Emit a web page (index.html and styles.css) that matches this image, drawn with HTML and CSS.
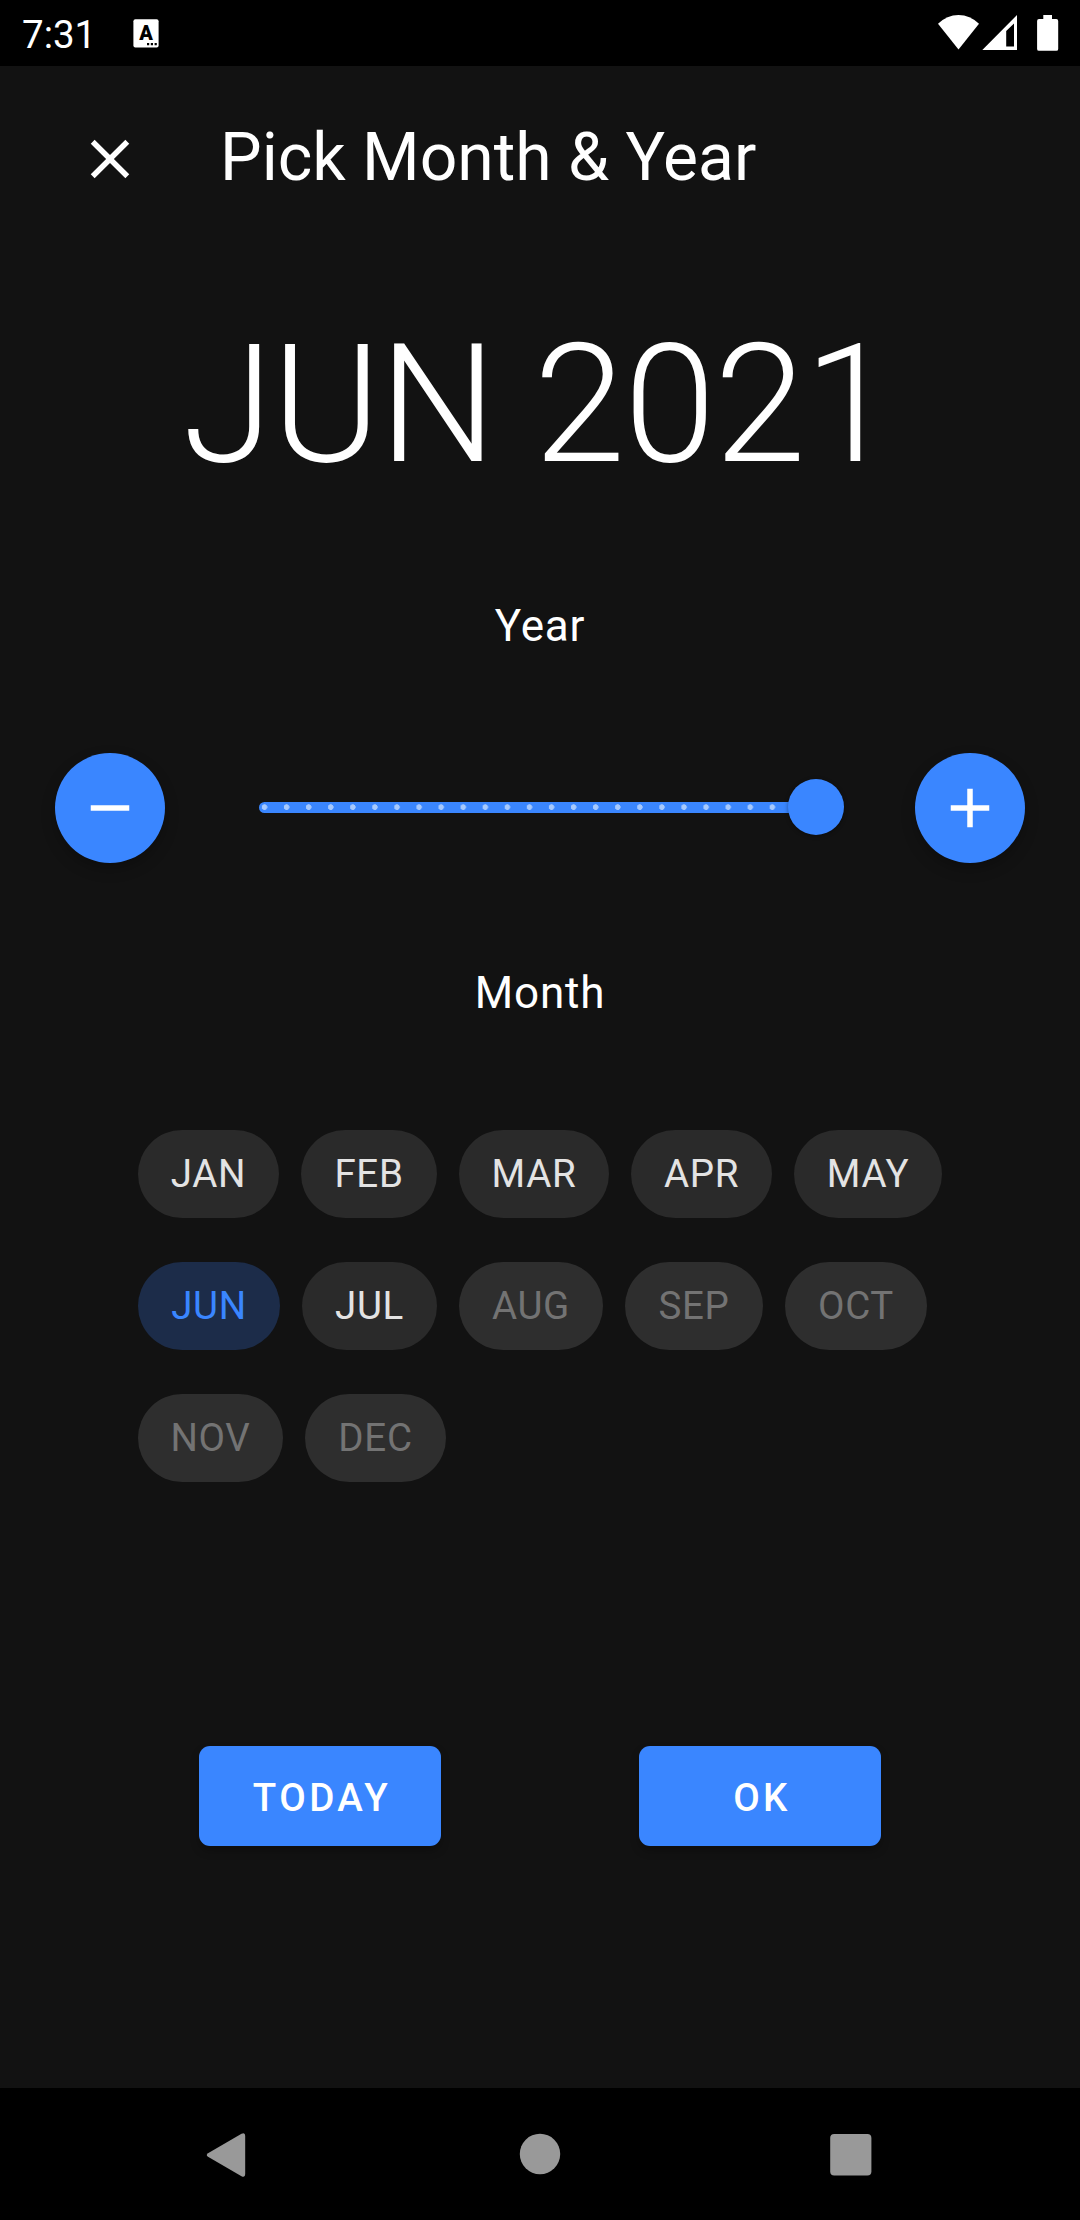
FILE: index.html
```html
<!DOCTYPE html>
<html lang="en">
<head>
<meta charset="utf-8">
<title>Pick Month &amp; Year</title>
<link rel="stylesheet" href="styles.css">
</head>
<body>
<div class="screen">
  <header class="status-bar">
    <span class="clock">7:31</span>
    <svg class="keyboard-icon" width="26" height="29" viewBox="0 0 26 29">
      <rect x=".4" y=".2" width="25.2" height="28.3" rx="2" fill="#fff"/>
      <text class="keyboard-letter" x="13" y="21" text-anchor="middle">A</text>
      <path d="M14 24h2.2v2.2H14zM17.8 24H20v2.2h-2.2zM21.6 24h2.2v2.2h-2.2z"/>
    </svg>
    <svg class="signal-icons" width="122" height="38" viewBox="0 0 122 38" fill="#fff">
      <path d="M0 9.8Q9 1 20.5 1T41 9.8L20.5 35.5z"/>
      <path fill-rule="evenodd" d="M79 1v35H44.3zM76 9.5L68.2 17v15.5H76z"/>
      <path d="M105.3 1h8.7v4h4.3q1.9 0 1.9 1.9v28q0 1.9-1.9 1.9h-17.3q-1.9 0-1.9-1.9v-28q0-1.9 1.9-1.9h4.3z"/>
    </svg>
  </header>

  <main class="content">
    <div class="toolbar">
      <svg class="icon" viewBox="0 0 24 24"><path d="M19 6.41L17.59 5 12 10.59 6.41 5 5 6.41 10.59 12 5 17.59 6.41 19 12 13.41 17.59 19 19 17.59 13.41 12z"/></svg>
      <h1 class="title">Pick Month &amp; Year</h1>
    </div>
    <div class="selection">JUN 2021</div>
    <h2 class="label">Year</h2>
    <div class="year-row">
      <button class="fab"><svg class="icon" viewBox="0 0 24 24"><path d="M19 13H5v-2h14v2z"/></svg></button>
      <div class="slider">
        <div class="track"></div>
        <div class="thumb"></div>
      </div>
      <button class="fab"><svg class="icon" viewBox="0 0 24 24"><path d="M19 13h-6v6h-2v-6H5v-2h6V5h2v6h6v2z"/></svg></button>
    </div>
    <h2 class="label label-month">Month</h2>
    <div class="months">
      <button class="chip jan">JAN</button>
      <button class="chip feb">FEB</button>
      <button class="chip mar">MAR</button>
      <button class="chip apr">APR</button>
      <button class="chip may">MAY</button>
      <button class="chip jun selected">JUN</button>
      <button class="chip jul">JUL</button>
      <button class="chip aug" disabled>AUG</button>
      <button class="chip sep" disabled>SEP</button>
      <button class="chip oct" disabled>OCT</button>
      <button class="chip nov" disabled>NOV</button>
      <button class="chip dec" disabled>DEC</button>
    </div>
    <div class="actions">
      <button class="action">TODAY</button>
      <button class="action">OK</button>
    </div>
  </main>

  <nav class="nav-bar">
    <svg width="46" height="50" viewBox="0 0 46 50"><path d="M4 23.2L37.5 3.8Q41.2 2 41.2 6v38q0 4-3.7 2.2L4 26.8Q1.500 25 4 23.2z"/></svg>
    <svg width="46" height="50" viewBox="0 0 46 50"><circle cx="23" cy="24" r="20.200"/></svg>
    <svg width="46" height="50" viewBox="0 0 46 50"><rect x=".2" y="4" width="41.200" height="41.500" rx="4"/></svg>
  </nav>
</div>
</body>
</html>
```
FILE: styles.css
```css
* {
  box-sizing: border-box;
}

body {
  margin: 0;
  background: #121212;
  color: #fff;
  font-family: Roboto, "Liberation Sans", sans-serif;
}

button {
  border: 0;
  padding: 0;
  font-family: inherit;
}

h1,
h2 {
  margin: 0;
  font-weight: 400;
}

.screen {
  width: 1080px;
  height: 2220px;
  display: flex;
  flex-direction: column;
}

.status-bar {
  height: 66px;
  padding: 0 20px 0 22px;
  display: flex;
  align-items: flex-start;
  background: #000;
}

.clock {
  width: 111px;
  padding-top: 12px;
  font-size: 38.5px;
  line-height: 45px;
}

.keyboard-icon {
  margin-top: 19px;
}

.keyboard-letter {
  font-size: 20px;
  font-weight: 900;
  fill: #000;
}

.signal-icons {
  margin: 14px 0 0 auto;
}

.content {
  flex: 1;
}

.icon {
  width: 66px;
  height: 66px;
  flex: none;
  display: block;
  fill: #fff;
}

.toolbar {
  display: flex;
  padding: 60px 77px 0;
  height: 154px;
}

.title {
  margin: -7px 0 0 77px;
  font-size: 66px;
  line-height: 78px;
}

.selection {
  height: 194px;
  margin-top: 88px;
  padding-right: 3px;
  text-align: center;
  font-size: 165px;
  font-weight: 300;
  line-height: 194px;
  letter-spacing: -0.00833em;
}

.label {
  height: 52px;
  margin-top: 98px;
  text-align: center;
  font-size: 44px;
  line-height: 52px;
  letter-spacing: 0.0179em;
}

.year-row {
  display: flex;
  align-items: center;
  margin-top: 101px;
  padding: 0 55px;
}

.fab {
  width: 110px;
  height: 110px;
  flex: none;
  display: grid;
  place-items: center;
  border-radius: 50%;
  background: #3a86ff;
  box-shadow: 0 6px 14px rgba(0, 0, 0, 0.25);
}

.slider {
  flex: 1;
  height: 56px;
  margin: -2px 71px 0 94px;
  display: flex;
  align-items: center;
}

.track {
  width: 535px;
  height: 11px;
  margin-top: 1px;
  border-radius: 5.5px 0 0 5.5px;
  background: radial-gradient(circle at 5.5px 5.1px, #a6c9ff 2.5px, transparent 3.1px) 0 0 / 22.08px 11px #3a86ff;
}

.thumb {
  width: 56px;
  height: 56px;
  margin-left: -6px;
  border-radius: 50%;
  background: #3a86ff;
  box-shadow: 0 1px 4px rgba(0, 0, 0, 0.4);
}

.label-month {
  margin-top: 104px;
}

.months {
  display: flex;
  flex-wrap: wrap;
  gap: 44px 22px;
  margin-top: 111px;
  padding: 0 130px 0 138px;
}

.chip {
  height: 88px;
  border-radius: 44px;
  background: #2a2a2a;
  color: #e3e3e3;
  font-size: 38.5px;
  line-height: 88px;
  letter-spacing: 0.01786em;
}

.jan,
.apr,
.dec {
  width: 141px;
}

.jun,
.oct {
  width: 142px;
}

.feb {
  width: 136px;
}

.mar {
  width: 150px;
}

.may {
  width: 148px;
}

.jul {
  width: 135px;
}

.aug {
  width: 144px;
}

.sep {
  width: 138px;
}

.nov {
  width: 145px;
}

.chip:disabled {
  background: #2e2e2e;
  color: #737373;
}

.chip.selected {
  background: #1c2c49;
  color: #3a86ff;
}

.actions {
  display: flex;
  justify-content: space-between;
  margin-top: 264px;
  padding: 0 199px;
}

.action {
  width: 242px;
  height: 100px;
  padding: 3px 0 0 4px;
  border-radius: 11px;
  background: #3a86ff;
  color: #fff;
  font-size: 38.5px;
  font-weight: 500;
  letter-spacing: 0.0893em;
  line-height: 97px;
  box-shadow: 0 5px 8px rgba(0, 0, 0, 0.25);
}

.nav-bar {
  height: 132px;
  padding: 42px 204px 0;
  display: flex;
  justify-content: space-between;
  background: #000;
}

.nav-bar svg {
  fill: #999;
}
```
